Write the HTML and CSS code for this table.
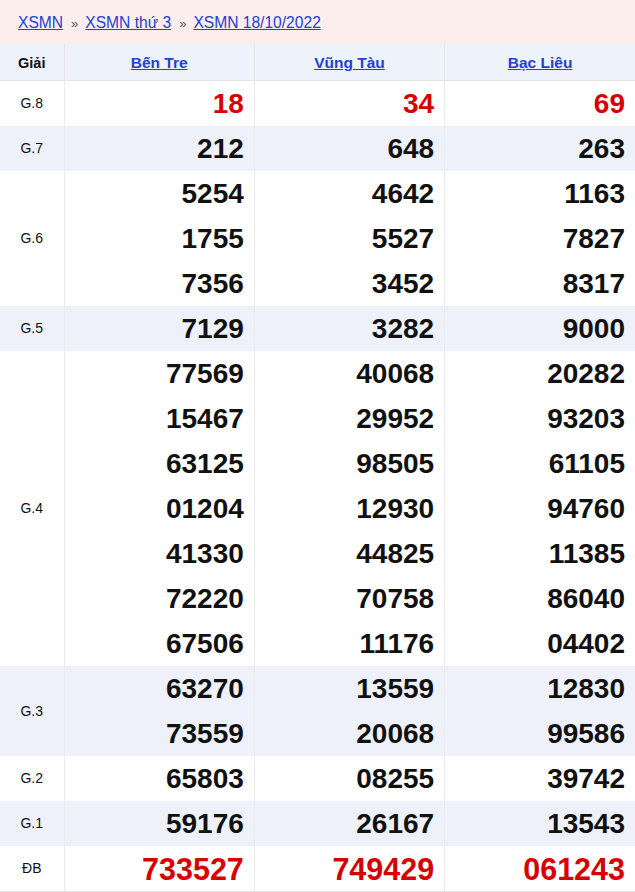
FILE: index.html
```html
<!DOCTYPE html>
<html lang="vi">
<head>
<meta charset="utf-8">
<title>XSMN 18/10/2022</title>
<link rel="stylesheet" href="styles.css">
</head>
<body>
<nav class="crumbs">
  <a href="#">XSMN</a><span class="sep">»</span><a href="#">XSMN thứ 3</a><span class="sep">»</span><a href="#">XSMN 18/10/2022</a>
</nav>
<table class="kq">
  <colgroup><col class="c-label"><col class="c-prov"><col class="c-prov"><col class="c-prov"></colgroup>
  <thead>
    <tr><th class="lbl">Giải</th><th><a href="#">Bến Tre</a></th><th><a href="#">Vũng Tàu</a></th><th><a href="#">Bạc Liêu</a></th></tr>
  </thead>
  <tbody>
    <tr class="red"><td class="lbl">G.8</td><td><div>18</div></td><td><div>34</div></td><td><div>69</div></td></tr>
    <tr class="alt"><td class="lbl">G.7</td><td><div>212</div></td><td><div>648</div></td><td><div>263</div></td></tr>
    <tr><td class="lbl">G.6</td><td><div>5254</div><div>1755</div><div>7356</div></td><td><div>4642</div><div>5527</div><div>3452</div></td><td><div>1163</div><div>7827</div><div>8317</div></td></tr>
    <tr class="alt"><td class="lbl">G.5</td><td><div>7129</div></td><td><div>3282</div></td><td><div>9000</div></td></tr>
    <tr><td class="lbl">G.4</td>
      <td><div>77569</div><div>15467</div><div>63125</div><div>01204</div><div>41330</div><div>72220</div><div>67506</div></td>
      <td><div>40068</div><div>29952</div><div>98505</div><div>12930</div><div>44825</div><div>70758</div><div>11176</div></td>
      <td><div>20282</div><div>93203</div><div>61105</div><div>94760</div><div>11385</div><div>86040</div><div>04402</div></td></tr>
    <tr class="alt"><td class="lbl">G.3</td><td><div>63270</div><div>73559</div></td><td><div>13559</div><div>20068</div></td><td><div>12830</div><div>99586</div></td></tr>
    <tr><td class="lbl">G.2</td><td><div>65803</div></td><td><div>08255</div></td><td><div>39742</div></td></tr>
    <tr class="alt"><td class="lbl">G.1</td><td><div>59176</div></td><td><div>26167</div></td><td><div>13543</div></td></tr>
    <tr class="red db"><td class="lbl">ĐB</td><td><div>733527</div></td><td><div>749429</div></td><td><div>061243</div></td></tr>
  </tbody>
</table>
</body>
</html>
```

FILE: styles.css
```css
html, body {
  margin: 0;
  padding: 0;
  background: #fff;
  font-family: "Liberation Sans", Arial, sans-serif;
}

.crumbs {
  height: 44px;
  box-sizing: border-box;
  padding: 14px 0 0 18px;
  background: #fdeeee;
  font-size: 15.6px;
  line-height: 18px;
  color: #666;
}
.crumbs a {
  color: #2140d4;
  text-decoration: underline;
}
.crumbs .sep {
  display: inline-block;
  margin: 0 7px 0 8px;
  font-size: 13px;
  color: #555;
}

.kq {
  width: 635px;
  border-collapse: collapse;
  table-layout: fixed;
}
.c-label { width: 64px; }

.kq th {
  height: 36px;
  box-sizing: border-box;
  padding: 2px 0 0;
  background: #eef2fa;
  border-bottom: 1px solid #e3e3e3;
  border-right: 1px solid #e6e6e6;
  font-size: 15.5px;
  font-weight: bold;
  text-align: center;
  vertical-align: middle;
}
.kq th:last-child { border-right: none; }
.kq th a { color: #2140d4; text-decoration: underline; }
.kq th.lbl { font-size: 14.5px; color: #111; }

.kq td {
  padding: 0 10px 0 0;
  border-right: 1px solid #ebebeb;
  text-align: right;
  vertical-align: middle;
  font-size: 28px;
  font-weight: bold;
  color: #111;
}
.kq td:last-child { border-right: none; }
.kq td div {
  height: 45px;
  line-height: 46px;
}
.kq td.lbl {
  padding: 0;
  text-align: center;
  font-size: 14px;
  line-height: 18px;
  font-weight: normal;
  color: #111;
}

.kq tr.alt td { background: #eef1f9; }
.kq tr.red td { color: #d70000; }
.kq tr.red td.lbl { color: #111; }
.kq tr.db td { font-size: 30.5px; border-bottom: 1px solid #e3e3e3; }
.kq tr.db td.lbl { font-size: 14px; }
```
